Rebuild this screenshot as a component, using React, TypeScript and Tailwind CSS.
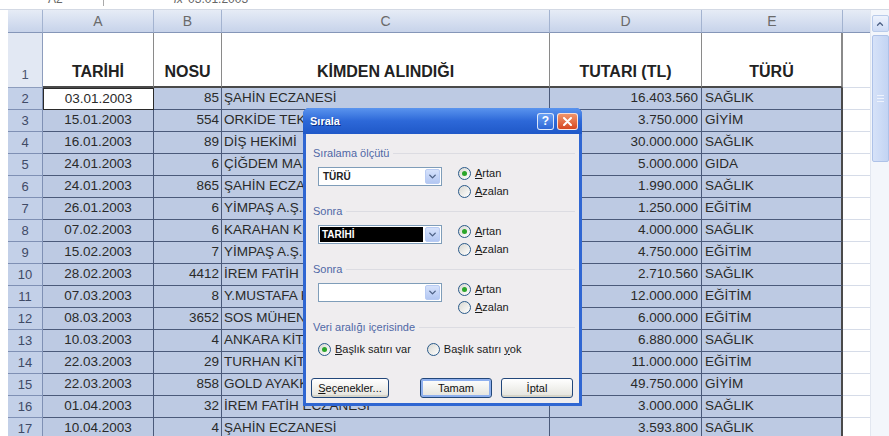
import { ChevronDown, ChevronUp } from 'lucide-react';

type Row = [string, string, string, string, string];

const rows: Row[] = [
  ['03.01.2003', '85', 'ŞAHİN ECZANESİ', '16.403.560', 'SAĞLIK'],
  ['15.01.2003', '554', 'ORKİDE TEKSTİL', '3.750.000', 'GİYİM'],
  ['16.01.2003', '89', 'DİŞ HEKİMİ', '30.000.000', 'SAĞLIK'],
  ['24.01.2003', '6', 'ÇİĞDEM MARKET', '5.000.000', 'GIDA'],
  ['24.01.2003', '865', 'ŞAHİN ECZANESİ', '1.990.000', 'SAĞLIK'],
  ['26.01.2003', '6', 'YİMPAŞ A.Ş.', '1.250.000', 'EĞİTİM'],
  ['07.02.2003', '6', 'KARAHAN KIRTASİYE', '4.000.000', 'SAĞLIK'],
  ['15.02.2003', '7', 'YİMPAŞ A.Ş.', '4.750.000', 'EĞİTİM'],
  ['28.02.2003', '4412', 'İREM FATİH ECZANESİ', '2.710.560', 'SAĞLIK'],
  ['07.03.2003', '8', 'Y.MUSTAFA KIRTASİYE', '12.000.000', 'EĞİTİM'],
  ['08.03.2003', '3652', 'SOS MÜHENDİSLİK', '6.000.000', 'EĞİTİM'],
  ['10.03.2003', '4', 'ANKARA KİTABEVİ', '6.880.000', 'SAĞLIK'],
  ['22.03.2003', '29', 'TURHAN KİTABEVİ', '11.000.000', 'EĞİTİM'],
  ['22.03.2003', '858', 'GOLD AYAKKABI', '49.750.000', 'GİYİM'],
  ['01.04.2003', '32', 'İREM FATİH ECZANESİ', '3.000.000', 'SAĞLIK'],
  ['10.04.2003', '4', 'ŞAHİN ECZANESİ', '3.593.800', 'SAĞLIK'],
];

const colHead =
  'flex items-center justify-center border-r border-b border-r-[#a3b3d0] border-b-[#8596b8] bg-gradient-to-b from-[#e6ecf6] to-[#c7d3ea] text-[14px] text-[#6a6a6a]';
const cell = 'flex items-center overflow-hidden whitespace-nowrap text-[13.5px] text-[#2a2a2a]';
const dataCell = `${cell} bg-[#bdcae3] border-r border-b border-[#4b5a7a]`;
const headCell =
  'flex items-end justify-center pb-[2px] bg-white border-r border-r-[#8a8a8a] border-b-2 border-b-[#4a4a4a] text-[16px] font-bold text-[#222]';

function Radio({ checked, label }: { checked?: boolean; label: React.ReactNode }) {
  return (
    <div className="flex h-[18px] items-center gap-[4px] text-[11px] text-[#1a1a1a]">
      <span className="flex h-[13px] w-[13px] items-center justify-center rounded-full border border-[#2a5a8a] bg-gradient-to-br from-[#d8d8d2] to-white">
        {checked && <span className="h-[5px] w-[5px] rounded-full bg-[#2aa52a]" />}
      </span>
      <span>{label}</span>
    </div>
  );
}

function Combo({ value, selected }: { value?: string; selected?: boolean }) {
  return (
    <div className="mt-[3px] flex h-[19px] w-[124px] items-center border border-[#7f9db9] bg-white pl-[1px] pr-[1px]">
      <div className="flex h-[15px] flex-1 items-center overflow-hidden text-[10px] font-bold">
        {selected ? (
          <span className="flex h-full w-full items-center bg-black pl-[2px] text-white">{value}</span>
        ) : (
          <span className="pl-[3px] text-[#222]">{value}</span>
        )}
      </div>
      <div className="ml-[2px] flex h-[15px] w-[15px] items-center justify-center rounded-[2px] border border-[#b8cbf3] bg-gradient-to-b from-[#d6e2fb] to-[#b3c7f2]">
        <ChevronDown size={11} strokeWidth={3} className="text-[#4d6185]" />
      </div>
    </div>
  );
}

function SectionLabel({ text }: { text: string }) {
  return (
    <div className="flex h-[14px] items-center gap-[4px] pl-[7px] pr-[4px] text-[11px] text-[#5068a6]">
      <span className="whitespace-nowrap">{text}</span>
      <div className="h-px flex-1 bg-[#dcdce2]" />
    </div>
  );
}

function SortSection({ label, value, selected }: { label: string; value?: string; selected?: boolean }) {
  return (
    <div className="mb-[4px]">
      <SectionLabel text={label} />
      <div className="mt-[4px] flex h-[36px] items-start pl-[12px]">
        <Combo value={value} selected={selected} />
        <div className="ml-[16px] flex flex-col">
          <Radio checked label={<><span className="underline">A</span>rtan</>} />
          <Radio label={<><span className="underline">A</span>zalan</>} />
        </div>
      </div>
    </div>
  );
}

function XpButton({ children, focused }: { children: React.ReactNode; focused?: boolean }) {
  return (
    <div
      className={`flex h-[20px] items-center justify-center rounded-[3px] border border-[#22477a] bg-gradient-to-b from-white to-[#e4e3dc] text-[11px] text-[#111] ${
        focused ? 'shadow-[inset_0_0_0_2px_#8fb0ee]' : 'shadow-[inset_0_-2px_0_#d6d4c8]'
      }`}
    >
      {children}
    </div>
  );
}

function SortDialog() {
  return (
    <div className="absolute left-[303px] top-[108px] flex w-[279px] flex-col rounded-t-[6px] bg-[#2f66d2] font-['Liberation_Sans',Arial,sans-serif]">
      <div className="flex h-[26px] items-center rounded-t-[6px] bg-gradient-to-b from-[#5a94ee] via-[#2d68d8] to-[#1f58c8] pl-[7px] pr-[4px]">
        <span className="text-[11px] font-bold text-white [text-shadow:1px_1px_0_#0b2f86]">Sırala</span>
        <div className="ml-auto flex items-center gap-[3px]">
          <div className="flex h-[17px] w-[17px] items-center justify-center rounded-[3px] border border-white/80 bg-gradient-to-b from-[#6aa0f4] to-[#2c66d6] text-[12px] font-bold text-white">
            ?
          </div>
          <div className="flex h-[17px] w-[21px] items-center justify-center rounded-[3px] border border-white/80 bg-gradient-to-b from-[#f0946a] to-[#d6461f]">
            <svg width="9" height="9" viewBox="0 0 9 9">
              <path d="M1 1 L8 8 M8 1 L1 8" stroke="white" strokeWidth="2" strokeLinecap="round" />
            </svg>
          </div>
        </div>
      </div>
      <div className="mx-[3px] mb-[3px] flex flex-col bg-[#efedef] pt-[12px] pb-[5px]">
        <SortSection label="Sıralama ölçütü" value="TÜRÜ" />
        <SortSection label="Sonra" value="TARİHİ" selected />
        <SortSection label="Sonra" />
        <SectionLabel text="Veri aralığı içerisinde" />
        <div className="mt-[6px] flex items-center pl-[12px]">
          <Radio checked label={<><span className="underline">B</span>aşlık satırı var</>} />
          <div className="ml-[16px]">
            <Radio label={<>Başlık satırı <span className="underline">y</span>ok</>} />
          </div>
        </div>
        <div className="mt-[20px] flex items-center pl-[5px]">
          <div className="w-[78px]">
            <XpButton>
              <span className="underline">S</span>eçenekler...
            </XpButton>
          </div>
          <div className="ml-[31px] w-[72px]">
            <XpButton focused>Tamam</XpButton>
          </div>
          <div className="ml-[9px] w-[72px]">
            <XpButton>İptal</XpButton>
          </div>
        </div>
      </div>
    </div>
  );
}

function Scrollbar() {
  return (
    <div className="flex w-[19px] flex-col items-center border-l border-[#e2e7f0] bg-[#f3f6fb] pt-[5px]">
      <div className="flex h-[17px] w-[17px] items-center justify-center rounded-[2px] border border-[#b9cbea] bg-gradient-to-b from-[#eef3fd] to-[#cddbf5]">
        <ChevronUp size={10} strokeWidth={3} className="text-[#4d6185]" />
      </div>
      <div className="mt-[3px] flex h-[127px] w-[17px] flex-col items-center justify-center gap-[2px] rounded-[2px] border border-[#aec2e8] bg-gradient-to-r from-[#d6e2f8] to-[#c3d4f3]">
        <div className="h-px w-[7px] bg-[#eef3fd]" />
        <div className="h-px w-[7px] bg-[#eef3fd]" />
        <div className="h-px w-[7px] bg-[#eef3fd]" />
      </div>
    </div>
  );
}

export default function App() {
  return (
    <div className="relative h-[436px] w-[889px] overflow-hidden bg-white font-['Liberation_Sans',Arial,sans-serif]">
      {/* formula bar, mostly scrolled off the top */}
      <div className="h-[10px] overflow-hidden border-b border-[#d3d9e4]">
        <div className="-mt-[8px] flex h-[14px] items-center text-[12px] text-[#666]">
          <span className="ml-[48px]">A2</span>
          <div className="ml-[40px] h-[14px] w-px bg-[#aaa]" />
          <span className="ml-[70px] italic">fx</span>
          <span className="ml-[5px]">03.01.2003</span>
        </div>
      </div>

      <div className="flex">
        <div className="grid w-[870px] grid-cols-[8px_35px_111px_68px_328px_152px_141px_27px] grid-rows-[23px_55px_repeat(16,22px)]">
          {/* column headers */}
          <div />
          <div className={colHead} />
          <div className={colHead}>A</div>
          <div className={colHead}>B</div>
          <div className={colHead}>C</div>
          <div className={colHead}>D</div>
          <div className={colHead}>E</div>
          <div className={`${colHead} border-r-0`} />

          {/* row 1: titles */}
          <div />
          <div className="flex items-end justify-center border-r border-b border-r-[#8d9dbd] border-b-[#8d9dbd] bg-[#e2e8f3] pb-[3px] text-[13px] text-[#4a5670]">
            1
          </div>
          <div className={headCell}>TARİHİ</div>
          <div className={headCell}>NOSU</div>
          <div className={headCell}>KİMDEN ALINDIĞI</div>
          <div className={headCell}>TUTARI (TL)</div>
          <div className={`${headCell} border-r-2 border-r-[#4a4a4a]`}>TÜRÜ</div>
          <div className="border-b border-[#d6dce8]" />

          {rows.map((r, i) => (
            <RowCells key={i} n={i + 2} r={r} active={i === 0} />
          ))}
        </div>
        <Scrollbar />
      </div>

      <SortDialog />
    </div>
  );
}

function RowCells({ n, r, active }: { n: number; r: Row; active: boolean }) {
  return (
    <>
      <div />
      <div className="flex items-center justify-center border-r border-b border-r-[#7f90b4] border-b-[#7f90b4] bg-[#c3d0e8] text-[13px] text-[#3f4a66]">
        {n}
      </div>
      <div
        className={
          active
            ? `${cell} justify-center border border-[#2a2a2a] bg-white`
            : `${dataCell} justify-center`
        }
      >
        {r[0]}
      </div>
      <div className={`${dataCell} justify-end pr-[2px]`}>{r[1]}</div>
      <div className={`${dataCell} pl-[2px]`}>{r[2]}</div>
      <div className={`${dataCell} justify-end pr-[3px]`}>{r[3]}</div>
      <div className={`${dataCell} border-r-2 border-r-[#4a4a4a] pl-[3px]`}>{r[4]}</div>
      <div className="border-b border-[#d6dce8]" />
    </>
  );
}
